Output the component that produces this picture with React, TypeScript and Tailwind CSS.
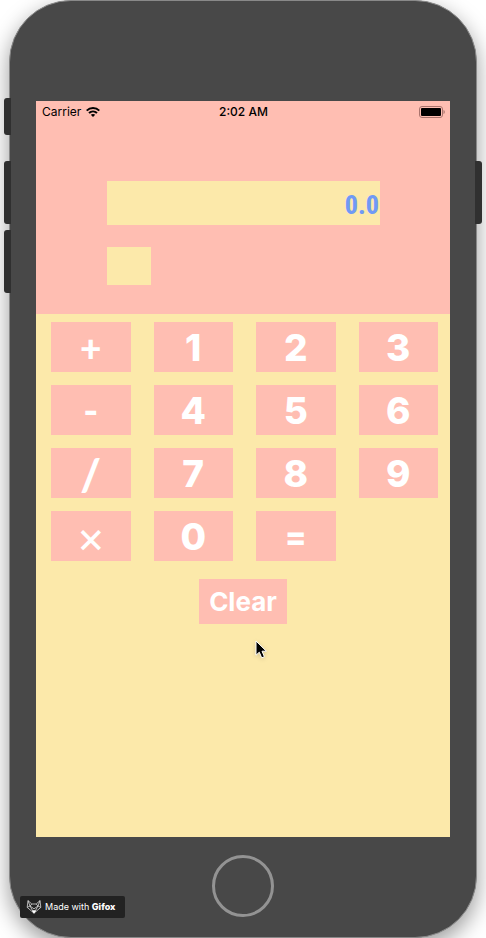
import { useState } from "react";

const rows: string[][] = [
  ["+", "1", "2", "3"],
  ["-", "4", "5", "6"],
  ["/", "7", "8", "9"],
  ["×", "0", "="],
];

const names: Record<string, string> = { "+": "Add", "-": "Subtract", "/": "Divide", "×": "Multiply", "=": "Equals" };

function compute(a: number, op: string, b: number): number {
  if (op === "+") return a + b;
  if (op === "-") return a - b;
  if (op === "/") return a / b;
  return a * b;
}

function faceOf(label: string): string {
  if (label === "×") return "font-['Inter',sans-serif] text-[44px] font-normal";
  if (label === "/") return "font-['Lato',sans-serif] text-[44px] font-black";
  if (label === "-" || label === "=") return "font-['Inter',sans-serif] text-[32px] font-extrabold";
  if (label === "+") return "font-['Lato',sans-serif] text-[37px] font-black";
  return "font-['Inter',sans-serif] text-[37px] font-extrabold";
}

function Key({ label, onPress }: { label: string; onPress: (label: string) => void }) {
  return (
    <button
      type="button"
      aria-label={names[label]}
      onClick={() => onPress(label)}
      className={`flex h-[50px] items-center justify-center bg-[#ffbeb2] pt-0.5 leading-[48px] text-white ${faceOf(label)}`}
    >
      {label}
    </button>
  );
}

function StatusBar() {
  return (
    <div className="grid h-[22px] grid-cols-3 items-center pr-[5px] pl-1.5 text-xs text-black">
      <div className="flex items-center gap-[5px]">
        <span>Carrier</span>
        <svg viewBox="0 0 14 10" className="h-[10px] w-[14px]" fill="none" stroke="black" strokeWidth="2" aria-hidden="true">
          <path d="M0.7 3.6C4.2 0.2 9.8 0.2 13.3 3.6" />
          <path d="M3 6.1C5.3 4 8.7 4 11 6.1" />
          <path d="M7 10L4.8 7.8C6 6.8 8 6.8 9.2 7.8Z" fill="black" stroke="none" />
        </svg>
      </div>
      <span className="text-center font-medium">2:02 AM</span>
      <svg viewBox="0 0 26 12" className="h-3 w-[26px] justify-self-end" aria-hidden="true">
        <rect x="0.5" y="0.5" width="23" height="11" rx="2.5" fill="none" stroke="#a9746d" />
        <rect x="2" y="2" width="20" height="8" rx="1" fill="black" />
        <path d="M24.5 4C26.2 4.6 26.2 7.4 24.5 8Z" fill="#a9746d" />
      </svg>
    </div>
  );
}

function GifoxBadge() {
  return (
    <div className="absolute bottom-5 left-5 flex h-[22px] w-[105px] items-center gap-[3px] rounded-xs bg-[#222222] pl-1.5 text-white">
      <svg viewBox="0 0 16 14" className="h-[14px] w-4 shrink-0" fill="none" stroke="#d8d8d8" strokeWidth="0.8" strokeLinejoin="round" aria-hidden="true">
        <path d="M2 0.6L1.2 7.4L8 13.2L14.8 7.4L14 0.6L10.2 4H5.8Z" />
        <path d="M2 0.6L4 6L8 13.2L12 6L14 0.6M1.2 7.4L4 6L5.8 4M14.8 7.4L12 6L10.2 4M4 6L8 8.8L12 6" />
        <path d="M6 11L8 10L10 11L8 13.4Z" fill="white" stroke="none" />
      </svg>
      <p className="text-[9px] leading-3 whitespace-nowrap">
        Made with <b className="font-extrabold">Gifox</b>
      </p>
    </div>
  );
}

export default function App() {
  const [display, setDisplay] = useState("0.0");
  const [operator, setOperator] = useState("");
  const [stored, setStored] = useState(0);
  const [fresh, setFresh] = useState(true);

  const press = (label: string) => {
    if (/\d/.test(label)) {
      setDisplay(fresh ? label : display + label);
      setFresh(false);
      return;
    }
    const value = operator ? compute(stored, operator, Number(display)) : Number(display);
    setStored(value);
    setDisplay(String(value));
    setOperator(label === "=" ? "" : label);
    setFresh(true);
  };

  const clear = () => {
    setDisplay("0.0");
    setOperator("");
    setStored(0);
    setFresh(true);
  };

  return (
    <div className="relative overflow-hidden bg-white px-[9px] font-['Inter',sans-serif]">
      <div className="relative rounded-[62px] border border-[#898989] bg-[#484848] px-[26px] pt-[100px] pb-5 shadow-[0_8px_22px_rgba(0,0,0,0.4)]">
        <span className="absolute top-[97px] -left-1.5 h-[37px] w-[7px] rounded-l-[3px] bg-[#303030]" />
        <span className="absolute top-[160px] -left-1.5 h-[63px] w-[7px] rounded-l-[3px] bg-[#303030]" />
        <span className="absolute top-[229px] -left-1.5 h-[63px] w-[7px] rounded-l-[3px] bg-[#303030]" />
        <span className="absolute top-[160px] -right-1.5 h-[63px] w-[7px] rounded-r-[3px] bg-[#303030]" />

        <main className="flex min-h-[736px] flex-col bg-[#fce9aa]">
          <header className="bg-[#ffbeb2] pb-[29px]">
            <StatusBar />
            <div className="flex flex-col items-start gap-[22px] pt-[58px] pr-[70px] pl-[71px]">
              <input
                readOnly
                aria-label="Result"
                value={display}
                className="h-11 w-full bg-[#fce9aa] pt-1 pr-px text-right font-['Roboto_Condensed','Open_Sans_Condensed','Noto_Sans_Condensed','Liberation_Sans_Narrow',sans-serif] text-[26px] font-extrabold text-[#7099f5] outline-none"
              />
              <input
                readOnly
                aria-label="Operator"
                value={operator}
                className="h-[38px] w-11 bg-[#fce9aa] text-center text-2xl font-bold text-[#7099f5] outline-none"
              />
            </div>
          </header>

          <div className="flex flex-col gap-[13px] pt-2 pr-3 pl-[15px]">
            {rows.map((row) => (
              <div key={row[0]} className="grid grid-cols-4 gap-[23px]">
                {row.map((label) => (
                  <Key key={label} label={label} onPress={press} />
                ))}
              </div>
            ))}
          </div>

          <button
            type="button"
            onClick={clear}
            className="mt-[18px] h-[45px] self-center bg-[#ffbeb2] px-2.5 text-[26px] font-bold text-white"
          >
            Clear
          </button>
        </main>

        <div className="flex justify-center pt-[18px]">
          <button type="button" aria-label="Home" className="size-[62px] rounded-full border-3 border-[#939393]" />
        </div>
      </div>

      <GifoxBadge />

      <svg viewBox="0 0 14 20" className="absolute top-[640px] left-[255px] h-5 w-[14px] drop-shadow-sm" aria-hidden="true">
        <path d="M1 1V15.2L4.3 12.2L6.7 17.8L9.4 16.7L7 11.2H11.4Z" fill="black" stroke="white" strokeWidth="1" />
      </svg>
    </div>
  );
}
